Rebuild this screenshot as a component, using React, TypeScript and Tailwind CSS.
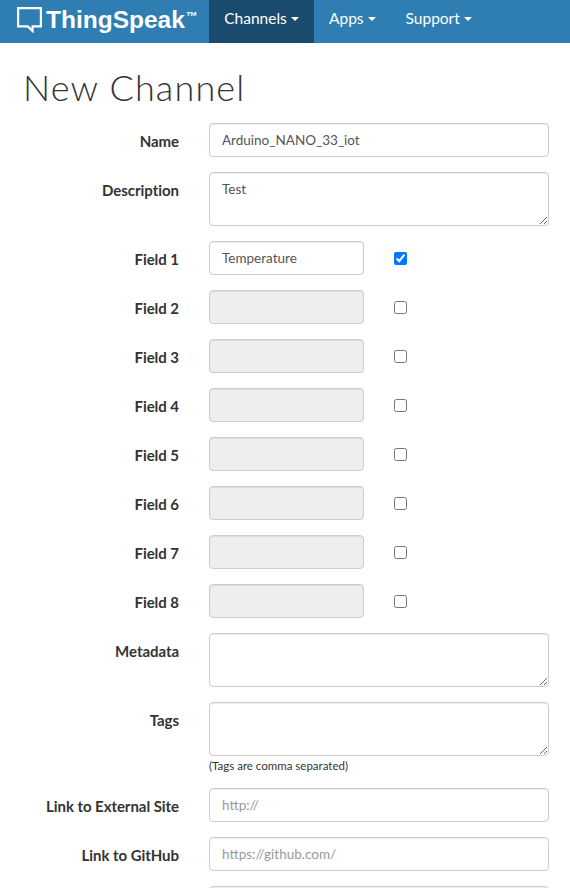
const font = "font-['Lato',sans-serif]";
const box = "block rounded-[4px] border border-[#cccccc] text-[13.5px] leading-[20px] text-[#555555] px-3 py-[6px] shadow-[inset_0_1px_1px_rgba(0,0,0,0.075)] placeholder:text-[#999999] font-['Lato',sans-serif] outline-none";

function Label({ children }: { children: string }) {
  return (
    <label className="w-[179px] shrink-0 pt-[8px] text-right text-[15px] leading-[20px] font-bold text-[#333333] font-['Lato',sans-serif] tracking-[-0.05px]">
      {children}
    </label>
  );
}

function TextRow({ label, value, placeholder }: { label: string; value?: string; placeholder?: string }) {
  return (
    <div className="flex gap-[30px] mb-[15px]">
      <Label>{label}</Label>
      <input type="text" defaultValue={value} placeholder={placeholder} className={`${box} h-[34px] w-[340px] bg-white`} />
    </div>
  );
}

function AreaRow({ label, value, help }: { label: string; value?: string; help?: string }) {
  return (
    <div className="flex gap-[30px] mb-[15px]">
      <Label>{label}</Label>
      <div className="w-[340px]">
        <textarea defaultValue={value} className={`${box} h-[54px] w-[340px] bg-white`} />
        {help && <p className="mt-[2px] h-[15px] text-[11.5px] leading-[15px] text-[#333333] font-['Lato',sans-serif]">{help}</p>}
      </div>
    </div>
  );
}

function FieldRow({ n, value }: { n: number; value?: string }) {
  return (
    <div className="flex gap-[30px] mb-[15px]">
      <Label>{`Field ${n}`}</Label>
      <input type="text" defaultValue={value} disabled={!value} className={`${box} h-[34px] w-[155px] ${value ? "bg-white" : "bg-[#eeeeee]"}`} />
      <div className="flex h-[34px] items-center">
        <input type="checkbox" defaultChecked={!!value} className="m-0 h-[13px] w-[13px]" />
      </div>
    </div>
  );
}

function Caret() {
  return <span className="ml-[4px] inline-block border-x-[4px] border-t-[4px] border-x-transparent border-t-white align-middle" />;
}

function Logo() {
  return (
    <svg width="25" height="26" viewBox="0 0 25 26" className="shrink-0">
      <path d="M1.1 1.1H23.9V19.4H15.6V24L10.8 19.4H1.1Z" fill="none" stroke="white" strokeWidth="2.2" />
    </svg>
  );
}

export default function App() {
  return (
    <div className="h-[888px] w-[570px] overflow-hidden bg-white">
      <nav className="flex h-[43px] bg-[#2e7eb3] text-white">
        <div className="flex w-[209px] items-center pl-[17px] pb-[3px]">
          <Logo />
          <span className="ml-[4px] font-['Liberation_Sans',sans-serif] text-[24.5px] font-bold leading-none">ThingSpeak</span>
          <span className="mb-[9px] ml-[1px] font-['Liberation_Sans',sans-serif] text-[12px] font-bold leading-none">™</span>
        </div>
        <a className="flex w-[105px] items-center justify-center bg-[#1a4b6e] pb-[5px] text-[15.5px] font-['Lato',sans-serif]">Channels<Caret /></a>
        <a className="flex items-center pb-[5px] pl-[15px] text-[15.5px] font-['Lato',sans-serif]">Apps<Caret /></a>
        <a className="ml-[30px] flex items-center pb-[5px] text-[15.5px] font-['Lato',sans-serif]">Support<Caret /></a>
      </nav>
      <h1 className={`${font} ml-[23px] mt-[24px] mb-[15px] h-[41px] text-[36px] font-light leading-[41px] tracking-[1.15px] text-[#333333]`}>New Channel</h1>
      <form>
        <TextRow label="Name" value="Arduino_NANO_33_iot" />
        <AreaRow label="Description" value="Test" />
        <FieldRow n={1} value="Temperature" />
        {[2, 3, 4, 5, 6, 7, 8].map((n) => (
          <FieldRow key={n} n={n} />
        ))}
        <AreaRow label="Metadata" />
        <AreaRow label="Tags" help="(Tags are comma separated)" />
        <TextRow label="Link to External Site" placeholder="http://" />
        <TextRow label="Link to GitHub" placeholder="https://github.com/" />
        <div className="ml-[209px]">
          <input type="text" className={`${box} h-[34px] w-[340px] bg-white`} />
        </div>
      </form>
    </div>
  );
}
